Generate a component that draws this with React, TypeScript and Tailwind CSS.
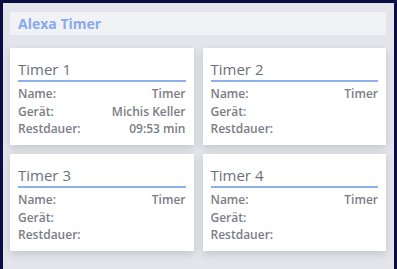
type Timer = {
  title: string
  name: string
  device: string
  remaining: string
}

const timers: Timer[] = [
  { title: 'Timer 1', name: 'Timer', device: 'Michis Keller', remaining: '09:53 min' },
  { title: 'Timer 2', name: 'Timer', device: '', remaining: '' },
  { title: 'Timer 3', name: 'Timer', device: '', remaining: '' },
  { title: 'Timer 4', name: 'Timer', device: '', remaining: '' },
]

function Row({ label, value }: { label: string; value: string }) {
  return (
    <div className="flex items-center justify-between leading-[17.5px]">
      <span>{label}</span>
      <span>{value}</span>
    </div>
  )
}

function TimerCard({ timer }: { timer: Timer }) {
  return (
    <div className="h-[97px] bg-white px-[8px] pt-[10px] shadow-[0_3px_8px_rgba(0,0,0,0.14)]">
      <div className="border-b-2 border-[#8eafea] text-[15px] leading-[22px] text-[#6b6f7a]">
        {timer.title}
      </div>
      <div className="mt-[3px] text-[12px] font-semibold text-[#7a7d86]">
        <Row label="Name:" value={timer.name} />
        <Row label="Gerät:" value={timer.device} />
        <Row label="Restdauer:" value={timer.remaining} />
      </div>
    </div>
  )
}

export default function App() {
  return (
    <div
      className="h-[269px] w-[397px] overflow-hidden border-x-[3px] border-t-[3px] border-[#0c0c45] bg-[#e4e5ea]"
      style={{ fontFamily: '"Open Sans", "Noto Sans", sans-serif' }}
    >
      <div className="pl-[7px] pr-[8px] pt-[9px]">
        <div className="flex h-[23px] items-center bg-[#f1f2f5] px-[8px] text-[14px] font-bold text-[#88a9ee]">
          Alexa Timer
        </div>
        <div className="mt-[13px] grid grid-cols-2 gap-[9px]">
          {timers.map((t) => (
            <TimerCard key={t.title} timer={t} />
          ))}
        </div>
      </div>
    </div>
  )
}
